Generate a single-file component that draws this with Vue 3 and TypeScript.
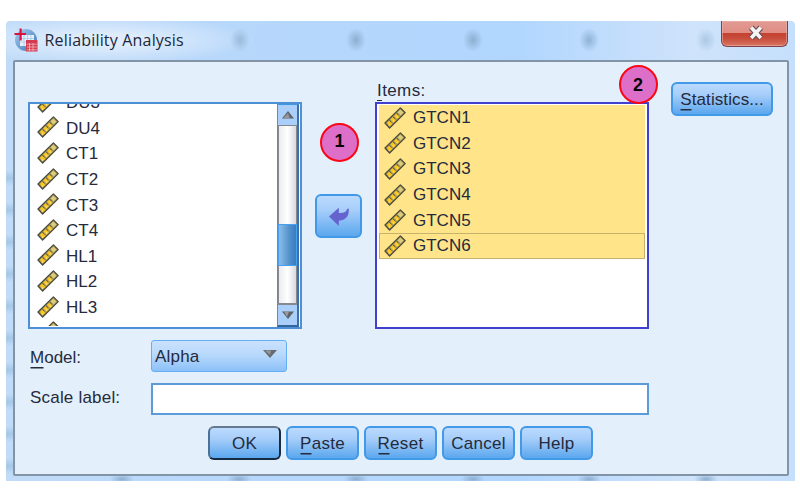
<script setup lang="ts">
import { ref } from 'vue'

const available = ref<string[]>(['DU3', 'DU4', 'CT1', 'CT2', 'CT3', 'CT4', 'HL1', 'HL2', 'HL3', 'HL4'])
const selected = ref<string[]>(['GTCN1', 'GTCN2', 'GTCN3', 'GTCN4', 'GTCN5', 'GTCN6'])
const focused = ref('GTCN6')
const scaleLabel = ref('')
const actions = [
  { key: 'O', rest: 'K', mnemonic: false },
  { key: 'P', rest: 'aste', mnemonic: true },
  { key: 'R', rest: 'eset', mnemonic: true },
  { key: 'C', rest: 'ancel', mnemonic: false },
  { key: 'H', rest: 'elp', mnemonic: false },
]
</script>

<template>
  <div class="page">
    <svg class="defs" width="0" height="0">
      <symbol id="ruler" viewBox="0 0 22 22">
        <path d="M1 16 16.400 .9 21.200 5.600 5.600 21Z" fill="#a89a58" stroke="#4b4b3e" stroke-width="1.300" stroke-linejoin="round" />
        <path d="M2.900 16 5.200 13.700 8.400 16.900 5.700 19.300ZM6.400 12.400 8.600 10.200 11.900 13.400 9.600 15.700ZM10 8.900 12.300 6.700 15.500 9.900 13.200 12.100Z" fill="#fcc61d" />
        <path d="M13.600 5.300 16.300 2.700 19.300 5.600 16.700 8.500Z" fill="#ddcc7c" />
        <path d="m5.200 13 2.200 2.200M8.800 9.500 11 11.700M12.500 5.900l2.200 2.200" stroke="#5d5a40" stroke-width="1" />
        <path d="m4.800 18.600 1-1M9 14.300l.9-.9M12.700 10.600l.9-.9" stroke="#ffe387" stroke-width="1.200" />
      </symbol>
    </svg>
    <div class="window">
      <header class="titlebar">
        <svg class="logo" viewBox="0 0 24 24" width="24" height="24">
          <defs>
            <linearGradient id="globe" x1="0" y1="0" x2="1" y2="1">
              <stop offset="0" stop-color="#a9cdf0" /><stop offset="1" stop-color="#3b75b8" />
            </linearGradient>
          </defs>
          <circle cx="12" cy="12" r="11" fill="url(#globe)" />
          <path d="M6 7h14v11H6z" fill="#e4f1fb" />
          <path d="M6 10.5h14M6 14h14M10 7v11M13.5 7v11M17 7v11" stroke="#a5c9e8" stroke-width=".8" />
          <path d="M6.600 .5v12M.5 6h11.500" stroke="#d9133e" stroke-width="2.200" />
          <path d="M12 12h11.5v11.5H12z" fill="#d43b50" />
          <path d="M12.8 16.2h10M12.8 19h10M12.8 21.8h10M15.5 15v8M19 15v8" stroke="#f2b7bd" stroke-width=".8" />
        </svg>
        <h1>Reliability Analysis</h1>
        <button class="close" aria-label="Close">
          <svg viewBox="0 0 18 16" width="18" height="16">
            <path d="M4.2 2.500 13.8 13M13.8 2.500 4.2 13" stroke="#6b5157" stroke-width="6" />
            <path d="M4.2 2.500 13.8 13M13.8 2.500 4.2 13" stroke="#f5f3f4" stroke-width="3.6" />
          </svg>
        </button>
      </header>

      <main class="panel">
        <section class="transfer">
          <div class="list source">
            <div class="viewport">
              <ul>
                <li v-for="name in available" :key="name">
                  <svg class="ruler"><use href="#ruler" /></svg><span>{{ name }}</span>
                </li>
              </ul>
            </div>
            <div class="scrollbar">
              <div class="step"><svg viewBox="0 0 12 8" width="12" height="8"><path d="M0 7.5 6 0l6 7.5Z" fill="#5f6267" /><path d="M1 7.5 6 2l2 5.5Z" fill="#93979c" /></svg></div>
              <div class="track"><div class="thumb"></div></div>
              <div class="step"><svg viewBox="0 0 12 8" width="12" height="8"><path d="M0 .5 6 8l6-7.5Z" fill="#5f6267" /><path d="M2 .5 5 6l2-5.5Z" fill="#989ca0" /></svg></div>
            </div>
          </div>
          <div class="middle">
            <button class="btn move" aria-label="Move">
              <svg viewBox="0 0 22 20" width="22" height="20"><path d="M1 9.6 10.8.7V6Q18.500 6.500 19 2L20.800 1.600Q21.500 13 10.800 13.800V19Z" fill="#6563ce" /></svg>
            </button>
            <span class="badge one">1</span>
          </div>
          <div class="target-column">
            <label><u>I</u>tems:</label>
            <div class="list target">
              <ul>
                <li v-for="name in selected" :key="name" :class="{ focused: name === focused }">
                  <svg class="ruler"><use href="#ruler" /></svg><span>{{ name }}</span>
                </li>
              </ul>
            </div>
            <span class="badge two">2</span>
          </div>
          <button class="btn statistics"><u>S</u>tatistics...</button>
        </section>

        <section class="form">
          <label class="model"><u>M</u>odel:</label>
          <div class="combo">
            <span>Alpha</span>
            <svg viewBox="0 0 14 8" width="14" height="8"><path d="M0 0h14L7 8Z" fill="#666b70" /><path d="M2 .5h6L7 5Z" fill="#92979c" /></svg>
          </div>
          <label class="scale">Scale label:</label>
          <input v-model="scaleLabel" type="text" aria-label="Scale label">
        </section>

        <footer class="actions">
          <button v-for="action in actions" :key="action.key" class="btn" :class="{ primary: action.key === 'O' }">
            <u v-if="action.mnemonic">{{ action.key }}</u><template v-else>{{ action.key }}</template>{{ action.rest }}
          </button>
        </footer>
      </main>
    </div>
  </div>
</template>

<style>
body {
  background: #fff;
  overflow: hidden;
}
</style>

<style scoped>
* {
  box-sizing: border-box;
}

.page {
  width: 800px;
  height: 500px;
  padding: 21px 0 0 6px;
  font: 17px/20px "Liberation Sans", Arial, sans-serif;
  color: #252a3c;
}

.defs {
  position: absolute;
}

.window {
  width: 789px;
  height: 460px;
  padding: 0 6px 5px 7px;
  display: flex;
  flex-direction: column;
  border-radius: 4px 4px 0 0;
  background:
    radial-gradient(ellipse 10px 12px at 234px 19px, #9abbdc, transparent),
    radial-gradient(ellipse 10px 12px at 350px 19px, #8caed0, transparent),
    radial-gradient(ellipse 10px 12px at 467px 19px, #8caed0, transparent),
    radial-gradient(ellipse 10px 12px at 583px 19px, #8fb3d5, transparent),
    radial-gradient(ellipse 10px 12px at 700px 19px, #abc8e4, transparent),
    radial-gradient(ellipse 12px 5px at 116px 458px, #8caed0, transparent),
    radial-gradient(ellipse 12px 5px at 233px 458px, #8caed0, transparent),
    radial-gradient(ellipse 12px 5px at 350px 458px, #8caed0, transparent),
    radial-gradient(ellipse 12px 5px at 467px 458px, #8caed0, transparent),
    radial-gradient(ellipse 12px 5px at 583px 458px, #8caed0, transparent),
    radial-gradient(ellipse 12px 5px at 700px 458px, #8caed0, transparent),
    radial-gradient(ellipse 150px 24px at 100px 19px, #deecfc 25%, transparent),
    repeating-linear-gradient(180deg, transparent 0 11px, #8fb4da88 19px, transparent 27px 32px) 0 138px / 7px 322px no-repeat,
    linear-gradient(90deg, #c1dcf8, #b7d7fb 28%, #b1d6fe 65%, #cfe3fb 87%, #c5dffc);
}

.titlebar {
  height: 39px;
  flex: none;
  display: flex;
  align-items: flex-start;
}

.logo {
  margin: 7px 0 0 1px;
}

h1 {
  margin: 8px 0 0 6.500px;
  flex: 1;
  font: 400 16px/22px "Open Sans", "Noto Sans", sans-serif;
  letter-spacing: 0.18px;
  color: #21283c;
}

.close {
  width: 67px;
  height: 26px;
  margin-right: 1px;
  padding: 0 0 1px 2px;
  display: grid;
  place-items: center;
  border: 1.500px solid #80434d;
  border-top: 0;
  border-radius: 0 0 6px 6px;
  background: linear-gradient(#df9b93, #e18d84 48%, #c44232 50%, #c84d3c 70%, #d87664);
  box-shadow: inset 0 0 0 1px #f0b8b088;
}

.panel {
  flex: 1;
  padding: 20px 14px 0;
  border: 2px solid #8494a7;
  border-radius: 2px;
  background: #e3effb;
}

.transfer {
  height: 247px;
  display: flex;
  align-items: flex-start;
}

.list {
  height: 227px;
  background: #fff;
}

.source {
  width: 274px;
  margin: 20px 0 0 -1px;
  display: flex;
  border: 2px solid #4d90d5;
}

.viewport {
  flex: 1;
  height: 222px;
  overflow: hidden;
}

ul {
  margin: 0;
  padding: 0;
  list-style: none;
}

.source ul {
  margin-top: -14px;
}

li {
  height: 25.600px;
  display: flex;
  align-items: center;
  padding-left: 7px;
}

li span {
  margin-left: 7px;
  padding-top: 1px;
}

.ruler {
  width: 22px;
  height: 22px;
  flex: none;
}

.source .ruler {
  margin-top: -2px;
}

.scrollbar {
  width: 22px;
  height: 223px;
  margin-right: 1px;
  display: flex;
  flex-direction: column;
  flex: none;
  border: 1.500px solid #3e96e8;
  border-right: 2px solid #3c70a7;
  border-bottom: 2px solid #34659a;
}

.step {
  height: 20px;
  display: grid;
  place-items: center;
  background: #a9cffa;
}

.track {
  flex: 1;
  padding-top: 98px;
  border: solid #858a92;
  border-width: 1px 1px 2px;
  background: linear-gradient(90deg, #ecebee, #fff 50%, #d9d9df);
}

.thumb {
  height: 42px;
  margin: 0 -1px;
  border: 1px solid #45a0f2;
  background: linear-gradient(90deg, #8dbde9, #4e8ecb 65%, #3a7dbb);
}

.middle {
  position: relative;
  width: 73px;
  height: 247px;
  padding: 112px 0 0 13px;
}

.btn {
  height: 34px;
  padding: 1px 0 0;
  border: 2px solid #4299e7;
  border-radius: 6px;
  background: linear-gradient(#bbdafe, #a7cefa 35%, #5ca7ee);
  font: inherit;
  letter-spacing: 0.300px;
  color: inherit;
}

.move {
  width: 47px;
  height: 44px;
  display: grid;
  place-items: center;
}

.badge {
  position: absolute;
  width: 39px;
  height: 39px;
  display: grid;
  place-items: center;
  border: 2px solid #fb0714;
  border-radius: 50%;
  background: #dd6fc9;
  font-weight: 700;
  font-size: 18px;
  color: #080408;
}

.one {
  left: 18px;
  top: 41px;
  padding-bottom: 3px;
}

.two {
  left: 243.500px;
  top: -17px;
}

.target-column {
  position: relative;
  width: 274px;
}

.target-column label {
  display: block;
  height: 20px;
  padding-left: 2px;
  line-height: 18px;
  letter-spacing: 0.4px;
}

.target {
  padding: 1px 2.500px 0 2px;
  border: 2px solid #413fcf;
}

.target li {
  padding-left: 5px;
  background: #ffe489;
}

.target .focused {
  padding-left: 4px;
  border: 1.500px solid #c5b36d;
}

.statistics {
  width: 102px;
  margin-left: 22px;
  letter-spacing: 0.1px;
}

u {
  text-decoration: none;
  box-shadow: 0 2px 0 -0.500px currentColor;
}

.target-column u {
  box-shadow: 0 1px 0 currentColor;
}

.form {
  display: grid;
  grid-template-columns: 122px 499px;
  grid-template-rows: 32px 32px;
  row-gap: 11px;
  margin-top: 11px;
  align-items: center;
}

.form label {
  padding-left: 1px;
}

.model {
  padding-top: 3px;
}

.combo {
  width: 136px;
  height: 32px;
  padding: 0 9px 0 4px;
  display: flex;
  align-items: center;
  justify-content: space-between;
  border: 1.500px solid #62aff5;
  border-radius: 3px;
  background: linear-gradient(#c9e1fd, #b9d9fc 45%, #8cc1f8);
}

.combo span {
  padding-top: 1px;
  margin-left: -1px;
  letter-spacing: 0.200px;
}

.combo svg {
  margin-top: -4px;
}

.scale {
  padding-bottom: 2px;
  letter-spacing: 0.200px;
}

input {
  width: 498px;
  height: 32px;
  border: 2px solid #5b9bd9;
  border-radius: 0;
  background: #fff;
}

.actions {
  display: flex;
  gap: 5px;
  margin: 11px 0 0 179px;
}

.actions .btn {
  width: 73px;
}

.actions .primary {
  border-color: #69798d #182b42 #182b42 #4d7194;
}
</style>
